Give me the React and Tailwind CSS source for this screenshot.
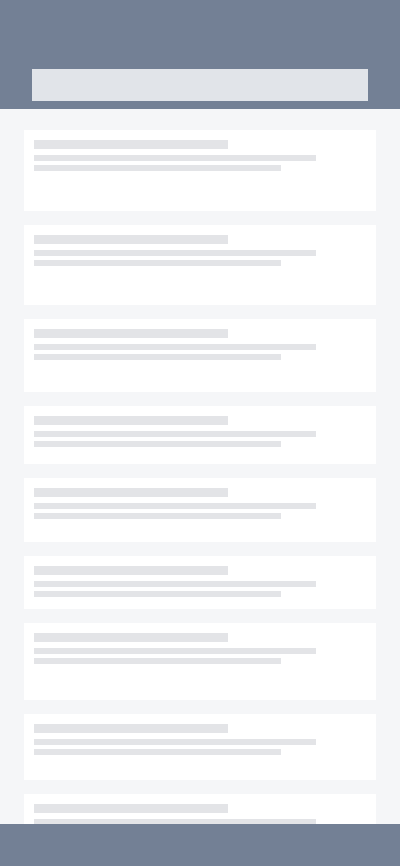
import React from 'react';

// skeleton placeholder list; card heights vary like the loaded rows would
const cards = [81, 80, 73, 58, 64, 53, 77, 66, 80];

const SkeletonCard = ({ height }) => (
  <div className="bg-white px-[10px] pt-[10px]" style={{ height }}>
    <div className="h-[9px] w-[194px] bg-[#e3e4e7]" />
    <div className="mt-[6px] h-[6px] w-[282px] bg-[#e3e4e7]" />
    <div className="mt-[4px] h-[6px] w-[247px] bg-[#e3e4e7]" />
  </div>
);

export default function App() {
  return (
    <div className="min-h-screen bg-[#f5f6f8] font-['Liberation_Sans',sans-serif]">
      <header className="h-[109px] bg-[#738095] px-[32px] pt-[69px]">
        <div className="h-[32px] bg-[#e1e4e9]" />
      </header>

      <main className="flex flex-col gap-[14px] px-[24px] pt-[21px] pb-[60px]">
        {cards.map((h, i) => (
          <SkeletonCard key={i} height={h} />
        ))}
      </main>

      <footer className="fixed bottom-0 left-0 right-0 h-[42px] bg-[#738095]" />
    </div>
  );
}
